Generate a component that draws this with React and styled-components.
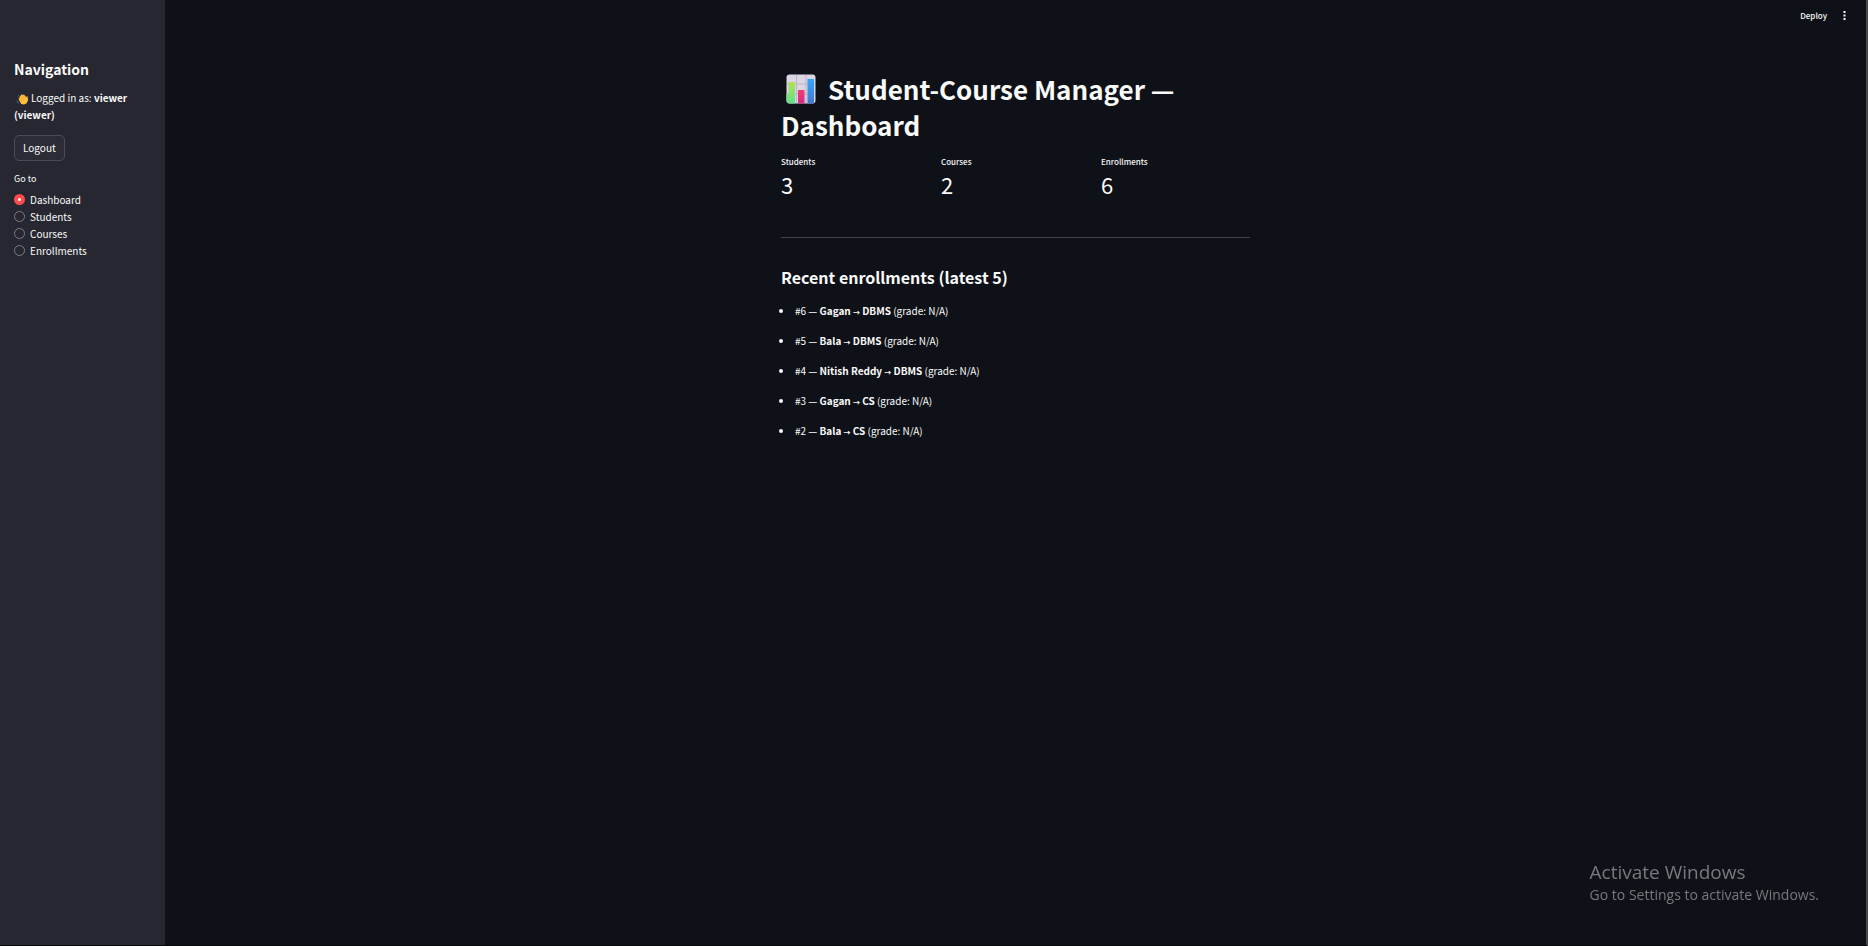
import React from "react";
import styled, { createGlobalStyle } from "styled-components";

const GlobalStyle = createGlobalStyle`
  *, *::before, *::after { box-sizing: border-box; }
  body {
    margin: 0;
    background: #0e1117;
    color: #fafafa;
    font-family: "Source Sans Pro", "Noto Sans CJK SC", "Noto Sans", sans-serif;
    font-size: 10px;
    line-height: 17px;
  }
  h1, h2, h3, p, ul, dl, dd { margin: 0; padding: 0; }
`;

const Shell = styled.div`
  display: flex;
  min-height: 100vh;
  border-right: 2px solid #4a4b4c;
  border-bottom: 1px solid #07080b;
`;

const Sidebar = styled.aside`
  flex: 0 0 165px;
  padding: 59px 14px 24px;
  background: #262730;
`;

const SidebarTitle = styled.h2`
  font-size: 14px;
  line-height: 20px;
  font-weight: 700;
  margin-bottom: 10px;
`;

const LoginNote = styled.p`
  margin-bottom: 12px;
`;

const WaveIcon = styled.svg`
  width: 12px;
  height: 12px;
  margin: 0 3px 0 2px;
  vertical-align: -3px;
`;

const LogoutButton = styled.button`
  display: block;
  height: 26px;
  padding: 0 8px 2px;
  border: 1px solid #4b4c54;
  border-radius: 5px;
  background: #2b2c36;
  color: inherit;
  font: inherit;
`;

const RadioGroup = styled.fieldset`
  margin: 10px 0 0;
  padding: 0;
  border: 0;
`;

const RadioLegend = styled.legend`
  padding: 0;
  margin-bottom: 4px;
  font-size: 9px;
  line-height: 16px;
`;

const RadioLabel = styled.label`
  display: flex;
  align-items: center;
  gap: 5px;
  height: 17px;
`;

const RadioInput = styled.input`
  appearance: none;
  width: 11px;
  height: 11px;
  margin: 0;
  border: 1px solid #7c7d83;
  border-radius: 50%;
  &:checked {
    border: 4px solid #ff4b4b;
    background: #fff;
  }
`;

const Main = styled.div`
  flex: 1;
  min-width: 0;
  display: flex;
  flex-direction: column;
`;

const Toolbar = styled.header`
  display: flex;
  justify-content: flex-end;
  align-items: center;
  gap: 12px;
  height: 30px;
  padding: 0 16px;
`;

const ToolbarButton = styled.button`
  display: flex;
  align-items: center;
  padding: 0;
  border: 0;
  background: none;
  color: inherit;
  font: inherit;
  font-size: 8px;
  font-weight: 500;
`;

const Content = styled.main`
  width: 100%;
  max-width: 469px;
  margin: 0 auto;
  padding-top: 41px;
`;

const Title = styled.h1`
  font-size: 26px;
  line-height: 36px;
  font-weight: 700;
`;

const ChartIcon = styled.svg`
  width: 30px;
  height: 30px;
  margin: 0 12px 0 5px;
  vertical-align: -4px;
`;

const Metrics = styled.dl`
  display: grid;
  grid-template-columns: repeat(3, 1fr);
  gap: 11px;
  margin-top: 11px;
`;

const MetricLabel = styled.dt`
  font-size: 8px;
  font-weight: 500;
  line-height: 16px;
`;

const MetricValue = styled.dd`
  font-size: 22px;
  line-height: 28px;
`;

const Divider = styled.hr`
  height: 1px;
  margin: 39px 0 28px;
  border: 0;
  background: #404247;
`;

const SectionTitle = styled.h3`
  font-size: 16px;
  line-height: 22px;
  font-weight: 700;
  margin-bottom: 14px;
`;

const EnrollmentList = styled.ul`
  display: grid;
  gap: 13px;
  list-style: none;
`;

const EnrollmentItem = styled.li`
  display: flex;
  align-items: center;
  gap: 12px;
  margin-left: -2px;
  &::before {
    content: "";
    width: 4px;
    height: 4px;
    border-radius: 50%;
    background: #fafafa;
  }
`;

const Arrow = styled.span`
  font-size: 7px;
  font-weight: 700;
  line-height: 1;
`;

const SystemNotice = styled.aside`
  position: fixed;
  right: 49px;
  bottom: 41px;
  color: #77797c;
  font-family: "Segoe UI", "Open Sans", sans-serif;
  font-size: 14px;
  line-height: 20px;
`;

const NoticeTitle = styled.p`
  font-size: 19px;
  line-height: 26px;
`;

const pages = ["Dashboard", "Students", "Courses", "Enrollments"];
const metrics = [
  ["Students", 3],
  ["Courses", 2],
  ["Enrollments", 6],
];
const enrollments = [
  [6, "Gagan", "DBMS"],
  [5, "Bala", "DBMS"],
  [4, "Nitish Reddy", "DBMS"],
  [3, "Gagan", "CS"],
  [2, "Bala", "CS"],
];

function Wave() {
  return (
    <WaveIcon viewBox="0 0 12 12" aria-hidden="true">
      <path d="M1.500 3.500 3 2M.8 7.500l1.500 3" stroke="#2379a8" strokeWidth="1" fill="none" />
      <path d="M3.200 7.500 2.400 5.700l1-.5L3.600 3.200l1-.3L5 1.600l1.200-.2.8.7 1-.5 2.500 3 .4-1.500.8.3.3 4-1.500 3.100-2.500 1-2.800-.5z" fill="#ffbd3d" />
      <path d="m4.400 3.400 3 3.300M6 2l3 3.500M3.400 5.500l2.800 2.700" stroke="#e88a24" strokeWidth=".5" />
    </WaveIcon>
  );
}

function Chart() {
  return (
    <ChartIcon viewBox="0 0 30 30" aria-hidden="true">
      <defs>
        <linearGradient id="green" x2="0" y2="1"><stop stopColor="#b3e253" /><stop offset="1" stopColor="#5fe08c" /></linearGradient>
        <linearGradient id="pink" x2="0" y2="1"><stop stopColor="#f33b76" /><stop offset="1" stopColor="#d02d80" /></linearGradient>
        <linearGradient id="blue" x2="0" y2="1"><stop stopColor="#35a8f5" /><stop offset="1" stopColor="#4478cf" /></linearGradient>
      </defs>
      <rect x=".5" y=".5" width="29" height="29" rx="3" fill="#dcd5e3" />
      <path d="M10.500 1v28M20 1v28M1 10h28M1 20h28" stroke="#bcb4c7" strokeWidth="1" />
      <path d="M2.500 8h6.500v21.500H3.500q-3 0-3-3V20h2z" fill="url(#green)" />
      <path d="M12 16h6.500v13.500H12z" fill="url(#pink)" />
      <path d="M21.500 5H28v24.300q-.5.200-1.500.2h-5z" fill="url(#blue)" />
    </ChartIcon>
  );
}

export default function App() {
  return (
    <>
      <GlobalStyle />
      <Shell>
        <Sidebar>
          <SidebarTitle>Navigation</SidebarTitle>
          <LoginNote>
            <Wave />Logged in as: <strong>viewer</strong> <strong>(viewer)</strong>
          </LoginNote>
          <LogoutButton type="button">Logout</LogoutButton>
          <RadioGroup>
            <RadioLegend>Go to</RadioLegend>
            {pages.map((page, index) => (
              <RadioLabel key={page}>
                <RadioInput type="radio" name="page" value={page} defaultChecked={index === 0} />
                {page}
              </RadioLabel>
            ))}
          </RadioGroup>
        </Sidebar>
        <Main>
          <Toolbar>
            <ToolbarButton type="button">Deploy</ToolbarButton>
            <ToolbarButton type="button" aria-label="Main menu">
              <svg width="11" height="11" viewBox="0 0 11 11" fill="currentColor" aria-hidden="true">
                <path d="M4.500 1h2v2h-2zM4.500 4.500h2v2h-2zM4.500 8h2v2h-2z" />
              </svg>
            </ToolbarButton>
          </Toolbar>
          <Content>
            <Title><Chart />Student-Course Manager — Dashboard</Title>
            <Metrics>
              {metrics.map(([label, value]) => (
                <div key={label}>
                  <MetricLabel>{label}</MetricLabel>
                  <MetricValue>{value}</MetricValue>
                </div>
              ))}
            </Metrics>
            <Divider />
            <SectionTitle>Recent enrollments (latest 5)</SectionTitle>
            <EnrollmentList>
              {enrollments.map(([id, student, course]) => (
                <EnrollmentItem key={id}>
                  <span>#{id} — <strong>{student}</strong> <Arrow>→</Arrow> <strong>{course}</strong> (grade: N/A)</span>
                </EnrollmentItem>
              ))}
            </EnrollmentList>
          </Content>
        </Main>
      </Shell>
      <SystemNotice>
        <NoticeTitle>Activate Windows</NoticeTitle>
        <p>Go to Settings to activate Windows.</p>
      </SystemNotice>
    </>
  );
}
